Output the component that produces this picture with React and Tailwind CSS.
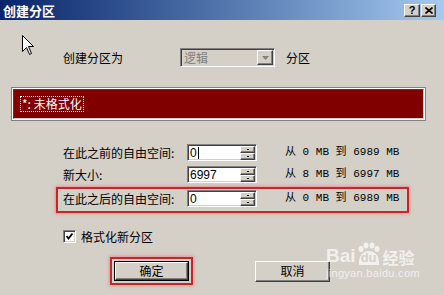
const CJK = "font-['Noto_Sans_CJK_SC','Noto_Sans',sans-serif]"

const raised =
  'border border-t-white border-l-white border-r-[#404040] border-b-[#404040] shadow-[inset_-1px_-1px_0_#808080] bg-[#d4d0c8]'
const sunken =
  'border border-t-[#808080] border-l-[#808080] border-r-white border-b-white shadow-[inset_1px_1px_0_#404040,inset_-1px_-1px_0_#d4d0c8]'

function Spinner() {
  return (
    <div className="flex flex-col w-[15px] h-[14px] mr-[1px]">
      {[0, 1].map(i => (
        <div key={i} className={`${raised} flex-1 flex items-center justify-center`}>
          <div className="w-[2px] h-[1px] bg-black" />
        </div>
      ))}
    </div>
  )
}

function Field({ label, value, range, caret }) {
  return (
    <div className="flex items-center">
      <div className={`w-[124px] text-[12px] leading-none text-black ${CJK}`}>{label}</div>
      <div className={`${sunken} w-[70px] h-[17px] bg-white flex items-center justify-between`}>
        <div className="flex items-center pl-[2px] text-[12px] leading-none text-black font-['Liberation_Sans',sans-serif]">
          {value}
          {caret && <span className="w-[1px] h-[12px] bg-black ml-[1px]" />}
        </div>
        <Spinner />
      </div>
      <div className="ml-[28px] text-[11px] leading-none text-black whitespace-pre font-['Liberation_Mono','Noto_Sans_CJK_SC',monospace]">
        {range}
      </div>
    </div>
  )
}

function Cursor() {
  return (
    <svg className="absolute left-[22px] top-[35px]" width="13" height="21" viewBox="0 0 13 21">
      <path
        d="M0.5 0.5 L0.5 16.5 L4.5 12.5 L7.5 19.5 L9.5 18.5 L6.5 11.5 L11.5 11.5 Z"
        fill="white"
        stroke="black"
        strokeWidth="1"
        strokeLinejoin="miter"
      />
    </svg>
  )
}

function Watermark() {
  return (
    <div className="absolute left-[326px] top-[242px] flex flex-col items-start text-white/70 pointer-events-none">
      <div className="flex items-end leading-none">
        <span className="text-[19px] font-bold font-['Liberation_Sans',sans-serif]">Bai</span>
        <span className="relative ml-[1px] flex flex-col items-center">
          <svg width="24" height="10" viewBox="0 0 24 10" className="mb-[-1px]">
            <ellipse cx="4" cy="7" rx="2.5" ry="3" fill="currentColor" />
            <ellipse cx="9" cy="3.5" rx="2.5" ry="3" fill="currentColor" />
            <ellipse cx="15" cy="3.5" rx="2.5" ry="3" fill="currentColor" />
            <ellipse cx="20" cy="7" rx="2.5" ry="3" fill="currentColor" />
          </svg>
          <span className="rounded-t-full bg-white/70 text-[#d4d0c8] px-[2px] text-[13px] font-bold leading-[14px] font-['Liberation_Sans',sans-serif]">
            du
          </span>
        </span>
        <span className={`ml-[2px] text-[16px] font-bold ${CJK}`}>经验</span>
      </div>
      <span className="mt-[3px] text-[11px] leading-none tracking-[0.3px] font-['Liberation_Sans',sans-serif]">
        jingyan.baidu.com
      </span>
    </div>
  )
}

export default function App() {
  return (
    <div className="relative w-[444px] h-[295px] overflow-hidden bg-[#d4d0c8] flex flex-col">
      {/* Title bar */}
      <div className="h-[20px] bg-gradient-to-r from-[#0a246a] to-[#a6caf0] flex items-center justify-between pl-[3px] pr-[8px]">
        <span className={`text-white text-[13px] font-bold leading-none ${CJK}`}>创建分区</span>
        <div className="flex items-center gap-[1px] mt-[1px]">
          <div className={`${raised} w-[16px] h-[13px] flex items-center justify-center text-[11px] font-bold leading-none font-['Liberation_Sans',sans-serif]`}>?</div>
          <div className={`${raised} w-[15px] h-[13px] flex items-center justify-center`}>
            <svg width="8" height="7" viewBox="0 0 8 7">
              <path d="M0.5 0.5 L7.5 6.5 M7.5 0.5 L0.5 6.5" stroke="black" strokeWidth="1.6" />
            </svg>
          </div>
        </div>
      </div>

      {/* Partition type */}
      <div className="mt-[28px] pl-[63px] flex items-center h-[19px]">
        <span className={`w-[117px] text-[12px] leading-none text-black ${CJK}`}>创建分区为</span>
        <div className={`${sunken} w-[95px] h-[19px] flex items-center justify-between bg-[#d4d0c8]`}>
          <span className={`pl-[3px] text-[12px] leading-none text-[#808080] ${CJK}`}>逻辑</span>
          <div className={`${raised} w-[16px] h-[15px] mr-[1px] flex items-center justify-center`}>
            <svg width="7" height="4" viewBox="0 0 7 4">
              <path d="M0 0 L7 0 L3.5 4 Z" fill="#808080" />
            </svg>
          </div>
        </div>
        <span className={`ml-[11px] text-[12px] leading-none text-black ${CJK}`}>分区</span>
      </div>

      {/* Partition list */}
      <div className="mt-[21px] ml-[12px] w-[413px] h-[32px] border border-white shadow-[0_0_0_1px_#808080]">
        <div className="w-full h-full bg-[#800000] border border-t-[#404040] border-l-[#404040] border-r-[#d4d0c8] border-b-[#d4d0c8] pl-[6px] pt-[1px]">
          <span className={`inline-block border border-dotted border-white px-[1px] text-[12px] leading-[14px] text-white ${CJK}`}>
            *: 未格式化
          </span>
        </div>
      </div>

      {/* Sizes */}
      <div className="mt-[24px] pl-[63px]">
        <Field label="在此之前的自由空间:" value="0" caret range="从 0 MB 到 6989 MB" />
      </div>
      <div className="mt-[5px] pl-[63px]">
        <Field label="新大小:" value="6997" range="从 8 MB 到 6997 MB" />
      </div>
      <div className="mt-[4px] ml-[56px] w-[353px] h-[26px] border-2 border-[#c0282c] shadow-[0_0_3px_1px_rgba(240,120,120,0.7)] pl-[5px] pt-[1px]">
        <Field label="在此之后的自由空间:" value="0" range="从 0 MB 到 6989 MB" />
      </div>

      {/* Format checkbox */}
      <div className="mt-[17px] pl-[63px] flex items-center">
        <div className={`${sunken} w-[13px] h-[13px] bg-white flex items-center justify-center`}>
          <svg width="7" height="7" viewBox="0 0 7 7">
            <path d="M0.5 3 L2.5 5.5 L6.5 0.5" stroke="black" strokeWidth="1.8" fill="none" />
          </svg>
        </div>
        <span className={`ml-[5px] text-[12px] leading-none text-black ${CJK}`}>格式化新分区</span>
      </div>

      {/* Buttons */}
      <div className="mt-[14px] flex items-center">
        <div className="ml-[110px] w-[83px] h-[28px] border-2 border-[#c0282c] shadow-[0_0_3px_1px_rgba(240,120,120,0.7)] flex items-center justify-center">
          <button className={`w-[75px] h-[20px] border border-black bg-[#d4d0c8] flex`}>
            <div className={`${raised} flex-1 flex items-center justify-center text-[12px] leading-none text-black ${CJK}`}>确定</div>
          </button>
        </div>
        <button className={`${raised} ml-[62px] w-[75px] h-[21px] flex items-center justify-center text-[12px] leading-none text-black ${CJK}`}>
          取消
        </button>
      </div>

      <Cursor />
      <Watermark />
    </div>
  )
}
